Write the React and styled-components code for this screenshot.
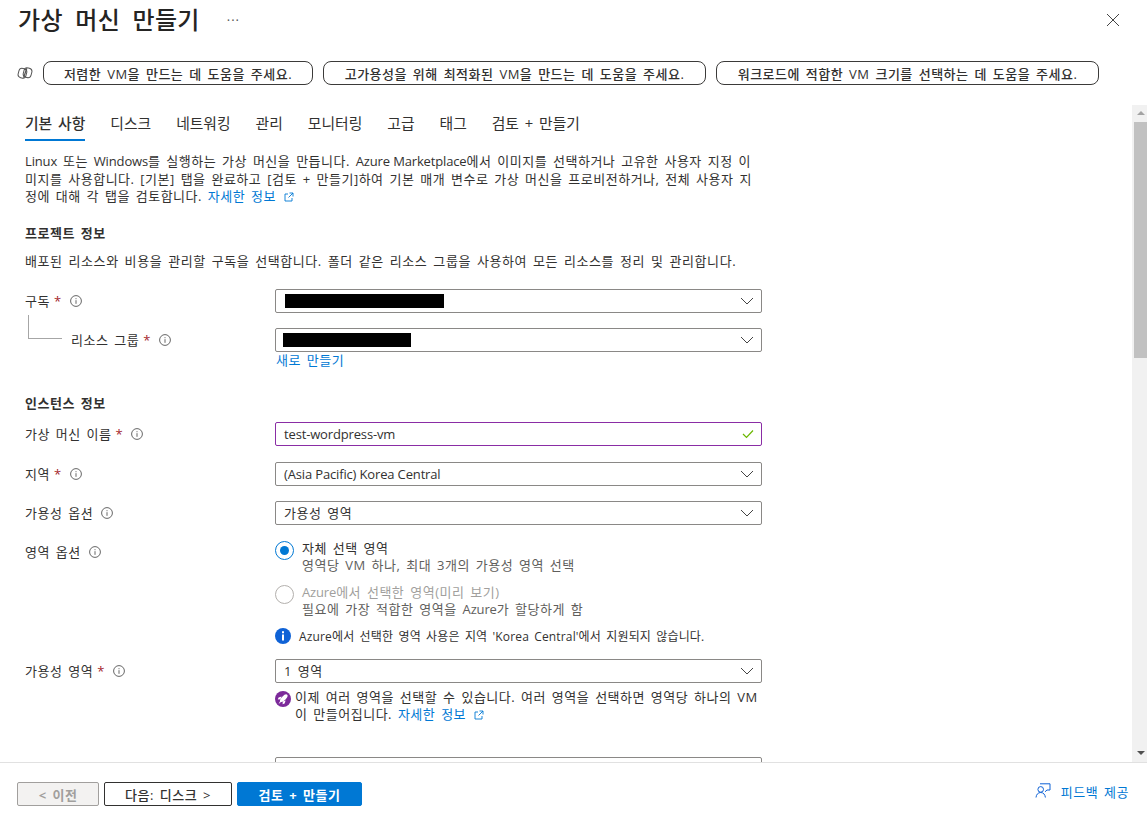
import React from 'react';
import styled, { createGlobalStyle } from 'styled-components';

const tabs = ['기본 사항', '디스크', '네트워킹', '관리', '모니터링', '고급', '태그', '검토 + 만들기'];
const prompts = [
  ['저렴한 VM을 만드는 데 도움을 주세요.', 270],
  ['고가용성을 위해 최적화된 VM을 만드는 데 도움을 주세요.', 383],
  ['워크로드에 적합한 VM 크기를 선택하는 데 도움을 주세요.', 383],
];

const InfoIcon = () => (
  <InfoSvg viewBox="0 0 12 12" width="12" height="12">
    <circle cx="6" cy="6" r="5.4" fill="none" stroke="#666" strokeWidth="1" />
    <path d="M6 5.2v3.6M6 3.2v1" stroke="#666" strokeWidth="1" />
  </InfoSvg>
);

const Chevron = () => (
  <ChevronSvg viewBox="0 0 14 8" width="14" height="8">
    <path d="M1 1l6 6 6-6" fill="none" stroke="#444" strokeWidth="1" />
  </ChevronSvg>
);

const ExternalIcon = () => (
  <ExternalSvg viewBox="0 0 10 10" width="10" height="10">
    <path d="M4 2H1v7h7V6M5.5 1H9v3.5M9 1L4.5 5.5" fill="none" stroke="#0078d4" strokeWidth="0.9" />
  </ExternalSvg>
);

const Field = ({ label, required, indent, children }) => (
  <Row>
    <Label $indent={indent}>
      {label}
      {required && <Star>*</Star>}
      {label && <InfoIcon />}
    </Label>
    <Control>{children}</Control>
  </Row>
);

const Select = ({ children }) => (
  <SelectBox>
    {children}
    <Chevron />
  </SelectBox>
);

const App = () => (
  <Page>
    <GlobalStyle />
    <Header>
      <Title>가상 머신 만들기</Title>
      <More>···</More>
      <CloseSvg viewBox="0 0 14 14" width="14" height="14">
        <path d="M1 1l12 12M13 1L1 13" stroke="#444" strokeWidth="1" />
      </CloseSvg>
    </Header>
    <PromptBar>
      <svg viewBox="0 0 16 16" width="16" height="16">
        <rect x="1.5" y="3.5" width="8" height="9.5" rx="3.4" fill="none" stroke="#555" strokeWidth="1" transform="rotate(15 5.5 8)" />
        <rect x="6.5" y="3" width="8" height="9.5" rx="3.4" fill="none" stroke="#555" strokeWidth="1" transform="rotate(15 10.5 8)" />
        <path d="M6.6 12.6l3.2-9.4" stroke="#555" strokeWidth="1.3" />
      </svg>
      {prompts.map(([text, width]) => (
        <Pill key={text} $width={width}>{text}</Pill>
      ))}
    </PromptBar>
    <Main>
      <Content>
        <Tabs>
          {tabs.map((tab, i) => (
            <Tab key={tab} $active={i === 0}>{tab}</Tab>
          ))}
        </Tabs>
        <Intro>
          <Latin>Linux</Latin> 또는 <Latin>Windows</Latin>를 실행하는 가상 머신을 만듭니다. <Latin>Azure Marketplace</Latin>에서 이미지를 선택하거나 고유한 사용자 지정 이<br />
          미지를 사용합니다. [기본] 탭을 완료하고 [검토 + 만들기]하여 기본 매개 변수로 가상 머신을 프로비전하거나, 전체 사용자 지<br />
          정에 대해 각 탭을 검토합니다. <Link>자세한 정보 <ExternalIcon /></Link>
        </Intro>
        <SectionTitle>프로젝트 정보</SectionTitle>
        <SectionText>배포된 리소스와 비용을 관리할 구독을 선택합니다. 폴더 같은 리소스 그룹을 사용하여 모든 리소스를 정리 및 관리합니다.</SectionText>
        <FormGroup>
          <Field label="구독" required>
            <Select><Redacted $width={159} /></Select>
          </Field>
          <TreeRow>
            <Tree />
            <Field label="리소스 그룹" required indent>
              <Select><Redacted $width={128} $shift={-2} /></Select>
              <CreateLink>새로 만들기</CreateLink>
            </Field>
          </TreeRow>
        </FormGroup>
        <SectionTitle $top={24}>인스턴스 정보</SectionTitle>
        <Stack>
          <Field label="가상 머신 이름" required>
            <TextBox>
              <Latin>test-wordpress-vm</Latin>
              <svg viewBox="0 0 12 10" width="12" height="10">
                <path d="M1 5l3.5 3.5L11 1.5" fill="none" stroke="#6bb700" strokeWidth="1.2" />
              </svg>
            </TextBox>
          </Field>
          <Field label="지역" required>
            <Select><Latin>(Asia Pacific) Korea Central</Latin></Select>
          </Field>
          <Field label="가용성 옵션">
            <Select>가용성 영역</Select>
          </Field>
          <Field label="영역 옵션">
            <RadioGroup>
              <RadioRow>
                <Radio $checked />
                <div>
                  <RadioTitle>자체 선택 영역</RadioTitle>
                  <RadioHint>영역당 VM 하나, 최대 3개의 가용성 영역 선택</RadioHint>
                </div>
              </RadioRow>
              <RadioRow>
                <Radio />
                <div>
                  <RadioTitle $disabled><Latin>Azure</Latin>에서 선택한 영역(미리 보기)</RadioTitle>
                  <RadioHint>필요에 가장 적합한 영역을 <Latin>Azure</Latin>가 할당하게 함</RadioHint>
                </div>
              </RadioRow>
              <Notice>
                <svg viewBox="0 0 16 16" width="16" height="16">
                  <circle cx="8" cy="8" r="8" fill="#0f62d6" />
                  <path d="M8 6.6v6M8 3.2v2" stroke="#fff" strokeWidth="2" />
                </svg>
                <span>Azure에서 선택한 영역 사용은 지역 'Korea Central'에서 지원되지 않습니다.</span>
              </Notice>
            </RadioGroup>
          </Field>
          <Field label="가용성 영역" required>
            <Select>1 영역</Select>
            <Promo>
              <svg viewBox="0 0 16 16" width="16" height="16">
                <circle cx="8" cy="8" r="8" fill="#7c2a9a" />
                <ellipse cx="8.8" cy="7.2" rx="2.1" ry="4.8" fill="#fff" transform="rotate(45 8.8 7.2)" />
                <path d="M6.6 5.4L3.6 6.4 2.8 8.4 5.4 8.2zM10.6 9.4L9.6 12.4 7.6 13.2 7.8 10.6zM5.4 9.4l1.2 1.2-3 2.4z" fill="#fff" />
              </svg>
              <PromoText>
                이제 여러 영역을 선택할 수 있습니다. 여러 영역을 선택하면 영역당 하나의 VM<br />
                이 만들어집니다. <Link>자세한 정보 <ExternalIcon /></Link>
              </PromoText>
            </Promo>
          </Field>
          <Field label="">
            <ClippedBox />
          </Field>
        </Stack>
      </Content>
      <Scrollbar>
        <ScrollArrow />
        <ScrollThumb />
        <ScrollArrow $down />
      </Scrollbar>
    </Main>
    <Footer>
      <PrevButton>&lt; 이전</PrevButton>
      <NextButton>다음: 디스크 &gt;</NextButton>
      <PrimaryButton>검토 + 만들기</PrimaryButton>
      <Feedback>
        <svg viewBox="0 0 16 16" width="16" height="16">
          <circle cx="5.7" cy="6.4" r="2.8" fill="none" stroke="#0f62d6" strokeWidth="1" />
          <path d="M1 14.5c.3-3 2-5 4.7-5s4.4 2 4.7 5M5 .8h10V7h-3l-2 1.8" fill="none" stroke="#0f62d6" strokeWidth="1" />
        </svg>
        피드백 제공
      </Feedback>
    </Footer>
  </Page>
);

const GlobalStyle = createGlobalStyle`
  html, body {
    margin: 0;
    padding: 0;
    background: #fff;
  }
  body {
    font-family: "Open Sans", "Noto Sans CJK KR", sans-serif;
    font-size: 13px;
    color: #323130;
    word-spacing: 2px;
    letter-spacing: 0.5px;
  }
`;

const Page = styled.div`
  display: flex;
  flex-direction: column;
  height: 825px;
  overflow: hidden;
`;

const Header = styled.div`
  display: flex;
  align-items: center;
  height: 40px;
  flex: none;
  padding: 0 27px 0 18px;
`;

const Title = styled.h1`
  margin: 0;
  font-size: 24px;
  font-weight: 500;
  line-height: 40px;
  letter-spacing: 0.3px;
  word-spacing: 6px;
  color: #252423;
`;

const More = styled.span`
  margin-left: 27px;
  color: #555;
  font-size: 13px;
  letter-spacing: 1px;
`;

const CloseSvg = styled.svg`
  margin-left: auto;
`;

const PromptBar = styled.div`
  display: flex;
  align-items: center;
  flex: none;
  gap: 10px;
  height: 24px;
  margin-top: 21px;
  padding-left: 17px;
`;

const Pill = styled.button`
  width: ${(p) => p.$width}px;
  height: 24px;
  padding: 0;
  border: 1px solid #3b3a39;
  border-radius: 8px;
  background: #fff;
  font: inherit;
  font-weight: 500;
  color: #323130;
  word-spacing: 2px;
  letter-spacing: 0.5px;
`;

const Main = styled.div`
  display: flex;
  flex: 1;
  min-height: 0;
  margin-top: 20px;
  border-bottom: 1px solid #e1e1e1;
`;

const Content = styled.div`
  flex: 1;
  min-width: 0;
  overflow: hidden;
  padding: 0 25px;
`;

const Scrollbar = styled.div`
  display: flex;
  flex-direction: column;
  align-items: center;
  flex: none;
  width: 15px;
  background: #f1f1f1;
`;

const ScrollArrow = styled.div`
  flex: none;
  width: 0;
  height: 0;
  margin: ${(p) => (p.$down ? 'auto 0 7px 2px' : '6px 0 6px 2px')};
  border-left: 4px solid transparent;
  border-right: 4px solid transparent;
  border-${(p) => (p.$down ? 'top' : 'bottom')}: 4px solid ${(p) => (p.$down ? '#505050' : '#a3a3a3')};
`;

const ScrollThumb = styled.div`
  flex: none;
  align-self: flex-end;
  width: 13px;
  height: 236px;
  margin-top: 1px;
  background: #c1c1c1;
`;

const Tabs = styled.div`
  display: flex;
  gap: 25px;
  height: 36px;
`;

const Tab = styled.div`
  height: 26px;
  padding-top: 8px;
  font-size: 14.8px;
  line-height: 20px;
  letter-spacing: 0;
  border-bottom: ${(p) => (p.$active ? '2px solid #0078d4' : 'none')};
  font-weight: ${(p) => (p.$active ? 500 : 400)};
  white-space: nowrap;
`;

const Latin = styled.span`
  letter-spacing: -0.15px;
  word-spacing: 0;
`;

const Intro = styled.p`
  margin: 12px 0 0;
  line-height: 17.5px;
  white-space: nowrap;
`;

const Link = styled.a`
  color: #0078d4;
`;

const ExternalSvg = styled.svg`
  margin-left: 2px;
  vertical-align: -1px;
`;

const SectionTitle = styled.h2`
  margin: ${(p) => p.$top || 17}px 0 0;
  font-size: 13px;
  font-weight: 700;
  line-height: 20px;
`;

const SectionText = styled.p`
  margin: 9px 0 0;
  line-height: 18px;
  letter-spacing: 0.57px;
  white-space: nowrap;
`;

const FormGroup = styled.div`
  display: flex;
  flex-direction: column;
  gap: 15px;
  margin-top: 19px;
`;

const TreeRow = styled.div`
  position: relative;
`;

const Tree = styled.div`
  position: absolute;
  left: 3px;
  top: -13px;
  width: 33px;
  height: 23px;
  border-left: 1px solid #a6a6a6;
  border-bottom: 1px solid #a6a6a6;
`;

const Stack = styled.div`
  display: flex;
  flex-direction: column;
  gap: 15px;
  margin-top: 9px;
`;

const Row = styled.div`
  display: grid;
  grid-template-columns: 250px 487px;
`;

const Label = styled.div`
  display: flex;
  align-items: center;
  align-self: start;
  height: 24px;
  padding-left: ${(p) => (p.$indent ? '46px' : '0')};
  white-space: nowrap;
`;

const Star = styled.span`
  margin-left: 4px;
  color: #a4262c;
`;

const InfoSvg = styled.svg`
  margin-left: 8px;
`;

const Control = styled.div`
  min-width: 0;
`;

const SelectBox = styled.div`
  display: flex;
  align-items: center;
  box-sizing: border-box;
  height: 24px;
  padding: 0 7px 0 8px;
  border: 1px solid #8a8886;
  border-radius: 2px;
`;

const ChevronSvg = styled.svg`
  margin-left: auto;
`;

const Redacted = styled.span`
  display: block;
  width: ${(p) => p.$width}px;
  height: 14px;
  margin-left: ${(p) => (p.$shift || 0) + 1}px;
  background: #000;
`;

const CreateLink = styled.a`
  display: block;
  margin-left: 1px;
  color: #0078d4;
  line-height: 17px;
`;

const TextBox = styled(SelectBox)`
  margin-bottom: 1px;
  border-color: #8a2da5;
  justify-content: space-between;
`;

const RadioGroup = styled.div`
  display: flex;
  flex-direction: column;
  gap: 10px;
`;

const RadioRow = styled.div`
  display: flex;
  gap: 8px;
  line-height: 17px;
`;

const Radio = styled.span`
  position: relative;
  flex: none;
  box-sizing: border-box;
  width: 19px;
  height: 19px;
  margin-top: 1px;
  border: 1px solid ${(p) => (p.$checked ? '#0078d4' : '#b3b0ad')};
  border-radius: 50%;

  &::after {
    content: '';
    display: ${(p) => (p.$checked ? 'block' : 'none')};
    position: absolute;
    inset: 4px;
    border-radius: 50%;
    background: #0078d4;
  }
`;

const RadioTitle = styled.div`
  color: ${(p) => (p.$disabled ? '#a19f9d' : '#323130')};
`;

const RadioHint = styled.div`
  color: #605e5c;
`;

const Notice = styled.div`
  display: flex;
  align-items: center;
  gap: 8px;
  margin: -1px 0 -1px;
  font-size: 12px;
  letter-spacing: 0.15px;
  white-space: nowrap;
`;

const Promo = styled.div`
  display: flex;
  gap: 4px;
  margin-top: 6px;

  svg {
    flex: none;
    margin-top: 2px;
  }
`;

const PromoText = styled.div`
  line-height: 17px;
  white-space: nowrap;
`;

const ClippedBox = styled(SelectBox)`
  margin-top: 19px;
`;

const Footer = styled.div`
  display: flex;
  align-items: center;
  flex: none;
  gap: 5px;
  height: 62px;
  padding: 0 18px 0 17px;
`;

const FooterButton = styled.button`
  height: 24px;
  padding: 0;
  border-radius: 2px;
  font: inherit;
  font-weight: 500;
  word-spacing: 2px;
  letter-spacing: 0.5px;
`;

const PrevButton = styled(FooterButton)`
  width: 82px;
  border: 1px solid #a19f9d;
  background: #f3f2f1;
  color: #a19f9d;
  font-weight: 700;
`;

const NextButton = styled(FooterButton)`
  width: 128px;
  border: 1px solid #323130;
  background: #fff;
  color: #323130;
`;

const PrimaryButton = styled(FooterButton)`
  width: 125px;
  border: 1px solid #0078d4;
  background: #0078d4;
  color: #fff;
  font-weight: 700;
`;

const Feedback = styled.a`
  display: flex;
  align-items: center;
  gap: 10px;
  margin-left: auto;
  margin-top: -6px;
  color: #0078d4;
`;

export default App;
